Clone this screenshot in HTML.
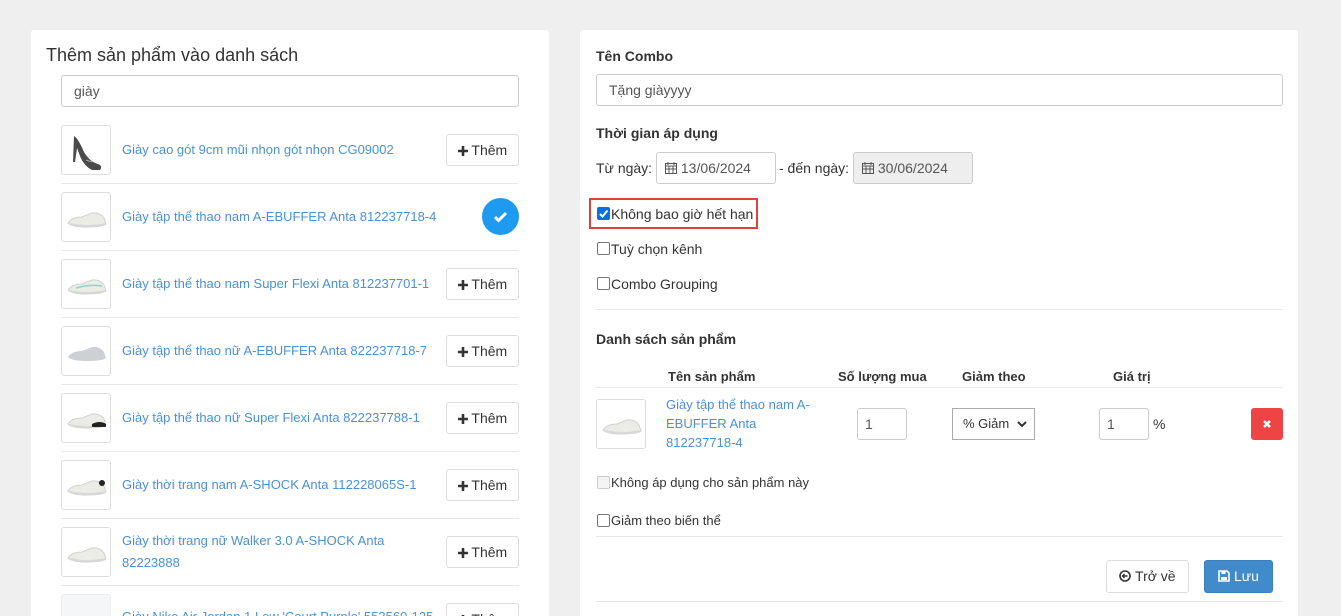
<!DOCTYPE html>
<html><head><meta charset="utf-8">
<style>
*{box-sizing:border-box;margin:0;padding:0}
html{width:1341px;height:616px;overflow:hidden}
body{width:1341px;height:616px;overflow:hidden;background:#efefef;font-family:"Liberation Sans",Arial,sans-serif;font-size:14px;color:#333;position:relative}
.a{position:absolute}
.panel{background:#fff;border-radius:3px}
.inp{position:absolute;border:1px solid #ccc;border-radius:3px;background:#fff;height:32px;padding:0 12px;line-height:30px;font-size:14px;color:#555}
.img{position:absolute;width:50px;height:50px;border:1px solid #ddd;border-radius:3px;background:#fff;overflow:hidden}
.lnk{position:absolute;color:#4a90d9;font-size:13px;line-height:22px}
.btn{position:absolute;border:1px solid #ddd;border-radius:3px;background:#fff;height:32px;line-height:30px;font-size:14px;color:#333;text-align:center}
.hr{position:absolute;height:1px;background:#e8e8e8}
.cb{position:absolute;width:13px;height:13px;border:1px solid #767676;border-radius:2px;background:#fff}
.lbl{position:absolute;font-size:14px;line-height:16px;color:#333}
.b{font-weight:bold}
.th{font-size:13px}
</style></head><body>
<svg width="0" height="0" style="position:absolute"><defs>
<g id="shoe"><path d="M6 30 Q10 24 20 24 L30 20 Q38 19 42 25 L44 31 Q40 34 25 34 Q10 34 6 30Z" fill="#ecece6" stroke="#cfd2d2" stroke-width="1"/><path d="M8 31 Q25 35 44 31" stroke="#d8d8d8" stroke-width="2" fill="none"/></g>
<g id="plus"><path d="M5 0v10M0 5h10" stroke="#333" stroke-width="2.6"/></g>
</defs></svg>

<div class="a panel" style="left:31px;top:30px;width:518px;height:600px"></div>
<div class="a panel" style="left:580px;top:30px;width:718px;height:600px"></div>

<div class="a" style="left:46px;top:44px;font-size:18px;color:#333;line-height:22px">Thêm sản phẩm vào danh sách</div>
<div class="inp" style="left:61px;top:75px;width:458px">giày</div>

<div class="img" style="left:61px;top:125px"><svg width="50" height="50"><path d="M12 10 Q16 12 22 26 Q28 36 36 38 Q41 40 38 44 L30 44 Q22 40 18 30 L15 22 L13 36 L11 36 Z" fill="#4a4a4a"/><path d="M24 34 l6 2" stroke="#aaa"/></svg></div>
<div class="lnk" style="left:122px;top:139px">Giày cao gót 9cm mũi nhọn gót nhọn CG09002</div>
<div class="btn" style="left:446px;top:134px;width:73px"><svg width="10" height="10" style="vertical-align:-1px"><use href="#plus"/></svg> Thêm</div>
<div class="hr" style="left:61px;top:183px;width:458px"></div>

<div class="img" style="left:61px;top:192px"><svg width="50" height="50"><use href="#shoe"/></svg></div>
<div class="lnk" style="left:122px;top:206px">Giày tập thể thao nam A-EBUFFER Anta 812237718-4</div>
<div class="a" style="left:482px;top:198px;width:37px;height:37px;border-radius:50%;background:#1e9bf0"><svg width="37" height="37"><path d="M13 19 l3.5 3.5 l7.5 -7.5" stroke="#fff" stroke-width="3" fill="none"/></svg></div>
<div class="hr" style="left:61px;top:250px;width:458px"></div>

<div class="img" style="left:61px;top:259px"><svg width="50" height="50"><use href="#shoe"/><path d="M14 28 Q28 24 40 26" stroke="#9cc" stroke-width="1.5" fill="none"/></svg></div>
<div class="lnk" style="left:122px;top:273px">Giày tập thể thao nam Super Flexi Anta 812237701-1</div>
<div class="btn" style="left:446px;top:268px;width:73px"><svg width="10" height="10" style="vertical-align:-1px"><use href="#plus"/></svg> Thêm</div>
<div class="hr" style="left:61px;top:317px;width:458px"></div>

<div class="img" style="left:61px;top:326px"><svg width="50" height="50"><path d="M6 30 Q10 24 20 24 L30 20 Q38 19 42 25 L44 31 Q40 34 25 34 Q10 34 6 30Z" fill="#cfd0d4"/></svg></div>
<div class="lnk" style="left:122px;top:340px">Giày tập thể thao nữ A-EBUFFER Anta 822237718-7</div>
<div class="btn" style="left:446px;top:335px;width:73px"><svg width="10" height="10" style="vertical-align:-1px"><use href="#plus"/></svg> Thêm</div>
<div class="hr" style="left:61px;top:384px;width:458px"></div>

<div class="img" style="left:61px;top:393px"><svg width="50" height="50"><use href="#shoe"/><path d="M30 30 Q38 26 44 30 L44 33 L30 33Z" fill="#222"/></svg></div>
<div class="lnk" style="left:122px;top:407px">Giày tập thể thao nữ Super Flexi Anta 822237788-1</div>
<div class="btn" style="left:446px;top:402px;width:73px"><svg width="10" height="10" style="vertical-align:-1px"><use href="#plus"/></svg> Thêm</div>
<div class="hr" style="left:61px;top:451px;width:458px"></div>

<div class="img" style="left:61px;top:460px"><svg width="50" height="50"><use href="#shoe"/><circle cx="40" cy="22" r="3" fill="#222"/></svg></div>
<div class="lnk" style="left:122px;top:474px">Giày thời trang nam A-SHOCK Anta 112228065S-1</div>
<div class="btn" style="left:446px;top:469px;width:73px"><svg width="10" height="10" style="vertical-align:-1px"><use href="#plus"/></svg> Thêm</div>
<div class="hr" style="left:61px;top:518px;width:458px"></div>

<div class="img" style="left:61px;top:527px"><svg width="50" height="50"><use href="#shoe"/></svg></div>
<div class="lnk" style="left:122px;top:530px">Giày thời trang nữ Walker 3.0 A-SHOCK Anta<br>82223888</div>
<div class="btn" style="left:446px;top:536px;width:73px"><svg width="10" height="10" style="vertical-align:-1px"><use href="#plus"/></svg> Thêm</div>
<div class="hr" style="left:61px;top:585px;width:458px"></div>

<div class="img" style="left:61px;top:594px;background:#f4f6f8;border-color:#eee"></div>
<div class="lnk" style="left:122px;top:606px;white-space:nowrap">Giày Nike Air Jordan 1 Low 'Court Purple' 553560-125</div>
<div class="btn" style="left:446px;top:603px;width:73px"><svg width="10" height="10" style="vertical-align:-1px"><use href="#plus"/></svg> Thêm</div>

<div class="a b" style="left:596px;top:48px;line-height:16px">Tên Combo</div>
<div class="inp" style="left:596px;top:74px;width:687px">Tặng giàyyyy</div>
<div class="a b" style="left:596px;top:125px;line-height:16px">Thời gian áp dụng</div>
<div class="lbl" style="left:596px;top:160px">Từ ngày:</div>
<div class="inp" style="left:656px;top:152px;width:120px;padding-left:8px"><svg width="12" height="12" style="vertical-align:-1px"><rect x="0.5" y="1.5" width="11" height="10" fill="none" stroke="#555"/><path d="M0 4h12M3 0v3M9 0v3M0 7h12M4 4v8M8 4v8" stroke="#555"/></svg> 13/06/2024</div>
<div class="lbl" style="left:779px;top:160px">- đến ngày:</div>
<div class="inp" style="left:853px;top:152px;width:120px;padding-left:8px;background:#eee"><svg width="12" height="12" style="vertical-align:-1px"><rect x="0.5" y="1.5" width="11" height="10" fill="none" stroke="#555"/><path d="M0 4h12M3 0v3M9 0v3M0 7h12M4 4v8M8 4v8" stroke="#555"/></svg> 30/06/2024</div>

<div class="a" style="left:589px;top:198px;width:169px;height:31px;border:2px solid #e0413b"></div>
<div class="cb" style="left:597px;top:207px;background:#0a6fe0;border-color:#0a6fe0"><svg width="11" height="11" style="position:absolute;left:0;top:0"><path d="M2 6 l2.5 2.5 l5 -6" stroke="#fff" stroke-width="2" fill="none"/></svg></div>
<div class="lbl" style="left:611px;top:206px">Không bao giờ hết hạn</div>
<div class="cb" style="left:597px;top:242px"></div>
<div class="lbl" style="left:611px;top:241px">Tuỳ chọn kênh</div>
<div class="cb" style="left:597px;top:277px"></div>
<div class="lbl" style="left:611px;top:276px">Combo Grouping</div>
<div class="hr" style="left:596px;top:309px;width:687px"></div>

<div class="a b" style="left:596px;top:331px;line-height:16px">Danh sách sản phẩm</div>
<div class="a b th" style="left:668px;top:369px;line-height:16px">Tên sản phẩm</div>
<div class="a b th" style="left:838px;top:369px;line-height:16px">Số lượng mua</div>
<div class="a b th" style="left:962px;top:369px;line-height:16px">Giảm theo</div>
<div class="a b th" style="left:1113px;top:369px;line-height:16px">Giá trị</div>
<div class="hr" style="left:596px;top:387px;width:687px"></div>

<div class="img" style="left:596px;top:399px"><svg width="50" height="50"><use href="#shoe"/></svg></div>
<div class="lnk" style="left:666px;top:395px;line-height:19px">Giày tập thể thao nam A-<br>EBUFFER Anta<br>812237718-4</div>
<div class="inp" style="left:857px;top:408px;width:50px;padding-left:7px">1</div>
<div class="inp" style="left:952px;top:408px;width:83px;padding-left:10px;color:#333;border-color:#aaa;border-radius:0;font-size:13px">% Giảm <svg width="10" height="8" style="position:absolute;right:7px;top:12px"><path d="M1 1 l4 4 l4 -4" stroke="#333" stroke-width="2" fill="none"/></svg></div>
<div class="inp" style="left:1099px;top:408px;width:50px;padding-left:7px">1</div>
<div class="lbl" style="left:1153px;top:416px">%</div>
<div class="a" style="left:1251px;top:408px;width:32px;height:32px;background:#ef4444;border-radius:3px"><svg width="32" height="32"><path d="M13 13l6 6M19 13l-6 6" stroke="#fff" stroke-width="2.6"/></svg></div>

<div class="cb" style="left:597px;top:476px;background:#f4f4f4;border-color:#ccc"></div>
<div class="lbl" style="left:611px;top:475px;font-size:13px">Không áp dụng cho sản phẩm này</div>
<div class="cb" style="left:597px;top:514px"></div>
<div class="lbl" style="left:611px;top:513px;font-size:13px">Giảm theo biến thể</div>
<div class="hr" style="left:596px;top:536px;width:687px"></div>

<div class="btn" style="left:1106px;top:560px;width:83px;height:33px;line-height:31px"><svg width="12" height="12" style="vertical-align:-1px"><circle cx="6" cy="6" r="5" fill="none" stroke="#333" stroke-width="1.6"/><path d="M8.5 6H4M5.5 4L3.5 6l2 2" stroke="#333" stroke-width="1.4" fill="none"/></svg> Trở về</div>
<div class="btn" style="left:1204px;top:560px;width:69px;height:33px;line-height:31px;background:#428bca;border-color:#3b7fbb;color:#fff"><svg width="12" height="12" style="vertical-align:-1px"><path d="M1 1h8l2 2v8H1z" fill="none" stroke="#fff" stroke-width="1.6"/><rect x="3.5" y="1" width="4" height="3" fill="#fff"/><rect x="3" y="7" width="6" height="3" fill="#fff"/></svg> Lưu</div>
<div class="hr" style="left:596px;top:601px;width:687px"></div>
</body></html>
